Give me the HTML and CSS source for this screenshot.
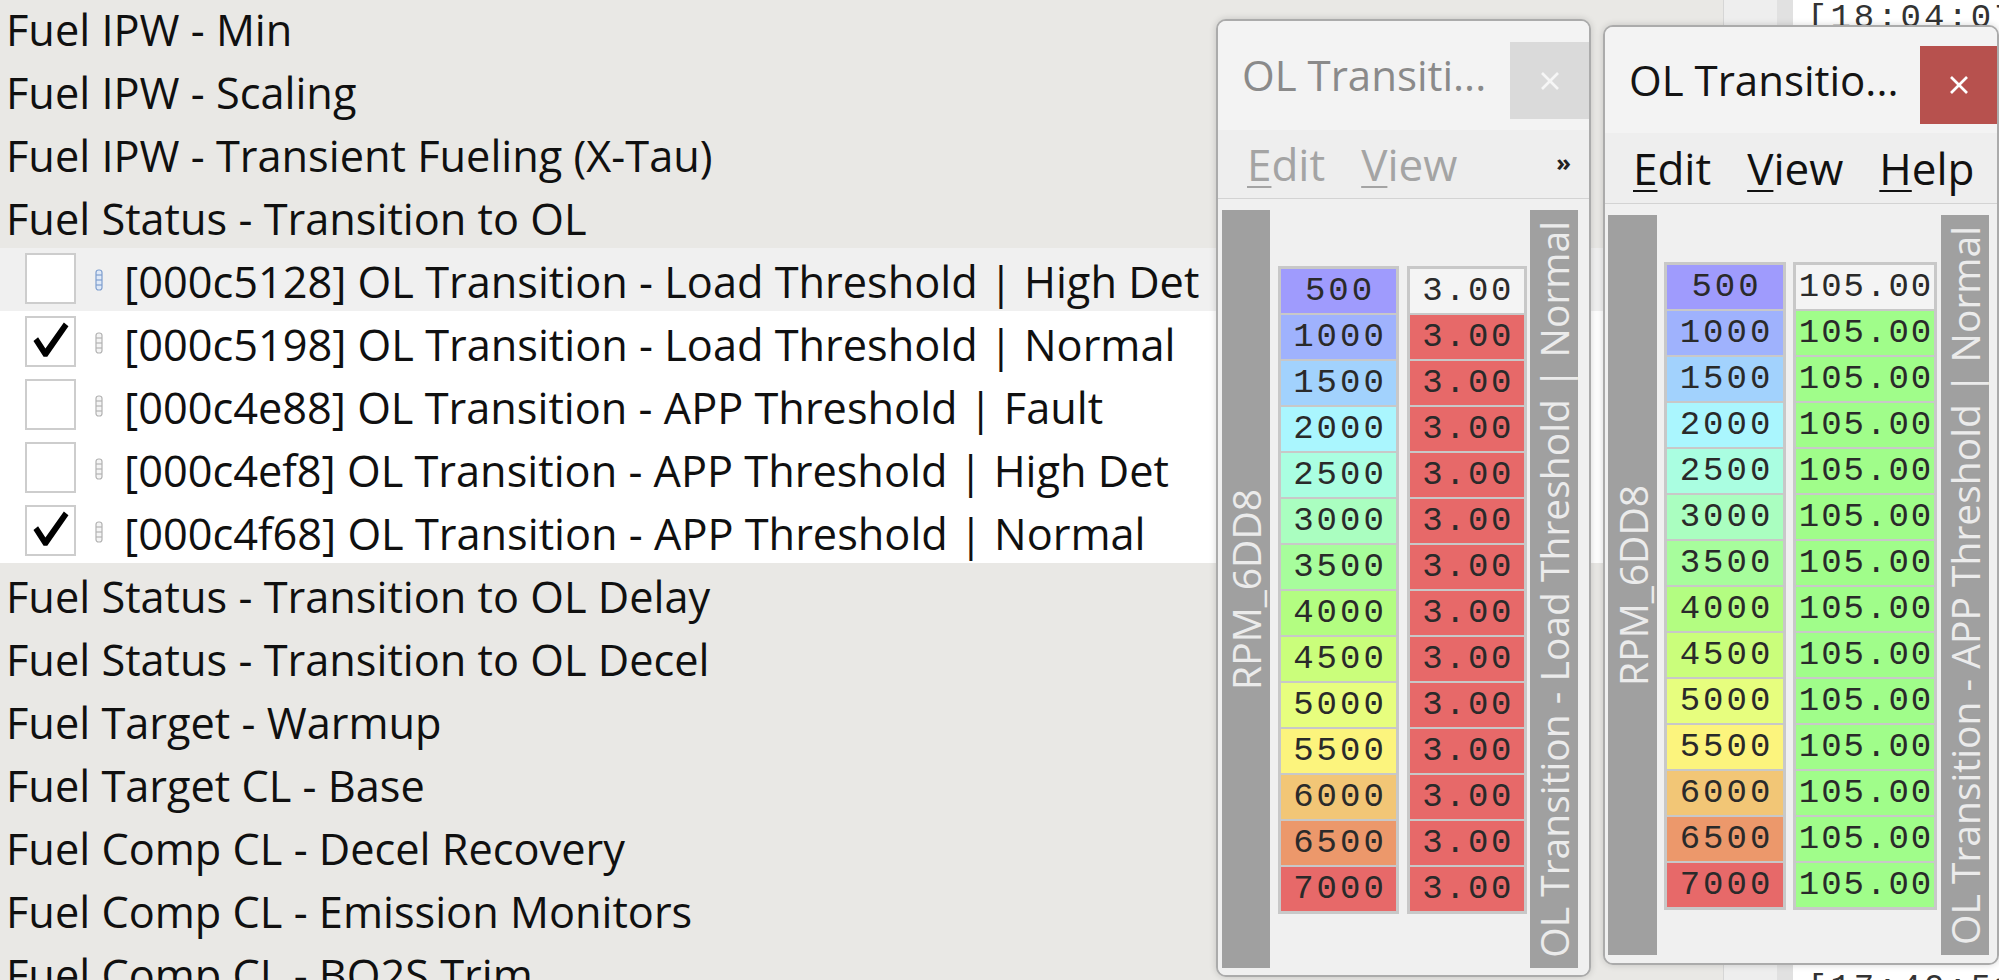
FILE: index.html
```html
<!DOCTYPE html>
<html>
<head>
<meta charset="utf-8">
<link rel="stylesheet" href="styles.css">
</head>
<body>
<div class="screen">
  <div class="list">
    <div class="row">Fuel IPW - Min</div>
    <div class="row">Fuel IPW - Scaling</div>
    <div class="row">Fuel IPW - Transient Fueling (X-Tau)</div>
    <div class="row">Fuel Status - Transition to OL</div>
    <div class="row sub sel">
      <span class="cb"></span>
      <svg class="ico blue" viewBox="0 0 8 22" width="8" height="22"><rect x="1" y="1" width="6" height="20" rx="2.5"/><line x1="1" y1="6" x2="7" y2="6"/><line x1="1" y1="11" x2="7" y2="11"/><line x1="1" y1="16" x2="7" y2="16"/></svg>
      <span class="lbl">[000c5128] OL Transition - Load Threshold | High Det</span>
    </div>
    <div class="row sub">
      <span class="cb"><svg viewBox="0 0 51 51" width="47" height="47"><polygon points="7,25 12,21 20,33 40,5 45,9 22,42 18,42"/></svg></span>
      <svg class="ico" viewBox="0 0 8 22" width="8" height="22"><rect x="1" y="1" width="6" height="20" rx="2.5"/><line x1="1" y1="6" x2="7" y2="6"/><line x1="1" y1="11" x2="7" y2="11"/><line x1="1" y1="16" x2="7" y2="16"/></svg>
      <span class="lbl">[000c5198] OL Transition - Load Threshold | Normal</span>
    </div>
    <div class="row sub">
      <span class="cb"></span>
      <svg class="ico" viewBox="0 0 8 22" width="8" height="22"><rect x="1" y="1" width="6" height="20" rx="2.5"/><line x1="1" y1="6" x2="7" y2="6"/><line x1="1" y1="11" x2="7" y2="11"/><line x1="1" y1="16" x2="7" y2="16"/></svg>
      <span class="lbl">[000c4e88] OL Transition - APP Threshold | Fault</span>
    </div>
    <div class="row sub">
      <span class="cb"></span>
      <svg class="ico" viewBox="0 0 8 22" width="8" height="22"><rect x="1" y="1" width="6" height="20" rx="2.5"/><line x1="1" y1="6" x2="7" y2="6"/><line x1="1" y1="11" x2="7" y2="11"/><line x1="1" y1="16" x2="7" y2="16"/></svg>
      <span class="lbl">[000c4ef8] OL Transition - APP Threshold | High Det</span>
    </div>
    <div class="row sub">
      <span class="cb"><svg viewBox="0 0 51 51" width="47" height="47"><polygon points="7,25 12,21 20,33 40,5 45,9 22,42 18,42"/></svg></span>
      <svg class="ico" viewBox="0 0 8 22" width="8" height="22"><rect x="1" y="1" width="6" height="20" rx="2.5"/><line x1="1" y1="6" x2="7" y2="6"/><line x1="1" y1="11" x2="7" y2="11"/><line x1="1" y1="16" x2="7" y2="16"/></svg>
      <span class="lbl">[000c4f68] OL Transition - APP Threshold | Normal</span>
    </div>
    <div class="row">Fuel Status - Transition to OL Delay</div>
    <div class="row">Fuel Status - Transition to OL Decel</div>
    <div class="row">Fuel Target - Warmup</div>
    <div class="row">Fuel Target CL - Base</div>
    <div class="row">Fuel Comp CL - Decel Recovery</div>
    <div class="row">Fuel Comp CL - Emission Monitors</div>
    <div class="row">Fuel Comp CL - BO2S Trim</div>
  </div>
  <div class="sbar"></div>
  <div class="split"></div>
  <div class="log">
    <div class="logline first">[18:04:07] Loaded</div>
    <div class="logline last">[17:40:51] Loaded</div>
  </div>

  <div class="win w1">
    <div class="tbar">
      <div class="ttl">OL Transiti...</div>
      <div class="close"><svg viewBox="0 0 18 18" width="18" height="18"><line x1="1" y1="1" x2="17" y2="17"/><line x1="17" y1="1" x2="1" y2="17"/></svg></div>
    </div>
    <div class="mbar">
      <span class="mi"><u>E</u>dit</span>
      <span class="mi"><u>V</u>iew</span>
      <span class="more">»</span>
    </div>
    <div class="content">
      <div class="vbar lb"><span>RPM_6DD8</span></div>
      <div class="col axis">
        <div class="cell c1">500</div>
        <div class="cell c2">1000</div>
        <div class="cell c3">1500</div>
        <div class="cell c4">2000</div>
        <div class="cell c5">2500</div>
        <div class="cell c6">3000</div>
        <div class="cell c7">3500</div>
        <div class="cell c8">4000</div>
        <div class="cell c9">4500</div>
        <div class="cell c10">5000</div>
        <div class="cell c11">5500</div>
        <div class="cell c12">6000</div>
        <div class="cell c13">6500</div>
        <div class="cell c14">7000</div>
      </div>
      <div class="col data">
        <div class="cell blank">3.00</div>
        <div class="cell red">3.00</div>
        <div class="cell red">3.00</div>
        <div class="cell red">3.00</div>
        <div class="cell red">3.00</div>
        <div class="cell red">3.00</div>
        <div class="cell red">3.00</div>
        <div class="cell red">3.00</div>
        <div class="cell red">3.00</div>
        <div class="cell red">3.00</div>
        <div class="cell red">3.00</div>
        <div class="cell red">3.00</div>
        <div class="cell red">3.00</div>
        <div class="cell red">3.00</div>
      </div>
      <div class="vbar rb"><span>OL Transition - Load Threshold | Normal</span></div>
    </div>
  </div>

  <div class="win w2">
    <div class="tbar">
      <div class="ttl">OL Transitio...</div>
      <div class="close"><svg viewBox="0 0 18 18" width="18" height="18"><line x1="1" y1="1" x2="17" y2="17"/><line x1="17" y1="1" x2="1" y2="17"/></svg></div>
    </div>
    <div class="mbar">
      <span class="mi"><u>E</u>dit</span>
      <span class="mi"><u>V</u>iew</span>
      <span class="mi"><u>H</u>elp</span>
    </div>
    <div class="content">
      <div class="vbar lb"><span>RPM_6DD8</span></div>
      <div class="col axis">
        <div class="cell c1">500</div>
        <div class="cell c2">1000</div>
        <div class="cell c3">1500</div>
        <div class="cell c4">2000</div>
        <div class="cell c5">2500</div>
        <div class="cell c6">3000</div>
        <div class="cell c7">3500</div>
        <div class="cell c8">4000</div>
        <div class="cell c9">4500</div>
        <div class="cell c10">5000</div>
        <div class="cell c11">5500</div>
        <div class="cell c12">6000</div>
        <div class="cell c13">6500</div>
        <div class="cell c14">7000</div>
      </div>
      <div class="col data">
        <div class="cell blank">105.00</div>
        <div class="cell green">105.00</div>
        <div class="cell green">105.00</div>
        <div class="cell green">105.00</div>
        <div class="cell green">105.00</div>
        <div class="cell green">105.00</div>
        <div class="cell green">105.00</div>
        <div class="cell green">105.00</div>
        <div class="cell green">105.00</div>
        <div class="cell green">105.00</div>
        <div class="cell green">105.00</div>
        <div class="cell green">105.00</div>
        <div class="cell green">105.00</div>
        <div class="cell green">105.00</div>
      </div>
      <div class="vbar rb"><span>OL Transition - APP Threshold | Normal</span></div>
    </div>
  </div>
</div>
</body>
</html>
```
FILE: styles.css
```css
html, body {
  margin: 0;
  padding: 0;
}
body {
  width: 1999px;
  height: 980px;
  overflow: hidden;
  background: #e9e8e5;
  font-family: "Open Sans", "Noto Sans", sans-serif;
}
.screen {
  position: relative;
  width: 1999px;
  height: 980px;
  display: flex;
  overflow: hidden;
}

/* left tree list */
.list {
  width: 1723px;
  flex: none;
  margin-top: -4px;
  display: flex;
  flex-direction: column;
}
.row {
  box-sizing: border-box;
  height: 63px;
  flex: none;
  display: flex;
  align-items: center;
  padding-top: 4px;
  padding-left: 6px;
  font-size: 43.3px;
  line-height: 63px;
  color: #101010;
  white-space: nowrap;
}
.row.sub {
  background: #ffffff;
  padding-left: 25px;
}
.row.sub.sel {
  background: #f0f0f0;
}
.cb {
  width: 51px;
  height: 51px;
  box-sizing: border-box;
  border: 2px solid #cdcdcd;
  background: #ffffff;
  flex: none;
  display: flex;
  align-items: center;
  justify-content: center;
  margin-top: -6px;
}
.cb svg polygon {
  fill: #000;
}
.ico {
  flex: none;
  margin-left: 19px;
  margin-right: 21px;
  margin-top: -4px;
}
.ico rect {
  fill: #f4f4f4;
  stroke: #b2b2b2;
  stroke-width: 1.2;
}
.ico line {
  stroke: #b2b2b2;
  stroke-width: 1.2;
}
.ico.blue rect {
  fill: #dfe9f7;
  stroke: #7f9fcf;
}
.ico.blue line {
  stroke: #7f9fcf;
}

/* scrollbar + splitter + log */
.sbar {
  width: 53px;
  flex: none;
  background: #eeeeee;
  border-left: 1px solid #d6d6d6;
}
.split {
  width: 16px;
  flex: none;
  background: #e1e1e1;
}
.log {
  flex: 1;
  background: #ffffff;
  display: flex;
  flex-direction: column;
  overflow: hidden;
  padding-left: 14px;
}
.logline {
  font-family: "Liberation Mono", monospace;
  font-size: 34px;
  letter-spacing: 3px;
  line-height: 36px;
  color: #333;
  white-space: nowrap;
}
.logline.last {
  margin-top: auto;
  margin-bottom: -26px;
}

/* floating windows */
.win {
  position: absolute;
  box-sizing: border-box;
  border: 2px solid #ababab;
  border-radius: 10px;
  background: #f0f0f0;
  display: flex;
  flex-direction: column;
  overflow: hidden;
  box-shadow: 0 0 7px rgba(0, 0, 0, 0.16);
}
.w1 {
  left: 1216px;
  top: 19px;
  width: 375px;
  height: 958px;
}
.w2 {
  left: 1603px;
  top: 25px;
  width: 396px;
  height: 940px;
}
.tbar {
  flex: none;
  display: flex;
  align-items: flex-start;
  background: #f3f3f3;
}
.w1 .tbar { height: 109px; }
.w2 .tbar { height: 106px; }
.ttl {
  padding-left: 24px;
  font-size: 42px;
  line-height: 50px;
  white-space: nowrap;
}
.w1 .ttl { margin-top: 29px; color: #8a8a8a; }
.w2 .ttl { margin-top: 28px; color: #141414; }
.close {
  margin-left: auto;
  display: flex;
  align-items: center;
  justify-content: center;
}
.close line {
  stroke-width: 2.6;
}
.w1 .close {
  margin-top: 21px;
  width: 79px;
  height: 77px;
  background: #dadada;
}
.w1 .close line { stroke: #f6f6f6; }
.w2 .close {
  margin-top: 19px;
  width: 77px;
  height: 78px;
  background: #b7514e;
}
.w2 .close line { stroke: #ffffff; }

.mbar {
  flex: none;
  display: flex;
  align-items: center;
  gap: 36px;
  background: #eeeeee;
  border-bottom: 1px solid #d3d3d3;
  font-size: 44px;
}
.w1 .mbar { height: 68px; padding-left: 29px; color: #a4a4a4; }
.w2 .mbar { height: 70px; padding-left: 28px; color: #111111; }
.mi {
  line-height: 60px;
  white-space: nowrap;
}
.mi u {
  text-decoration-thickness: 2px;
  text-underline-offset: 5px;
}
.more {
  margin-left: auto;
  margin-right: 18px;
  font-size: 24px;
  font-weight: bold;
  color: #222;
  line-height: 30px;
  margin-top: -4px;
}

/* content */
.content {
  flex: 1;
  display: flex;
  align-items: stretch;
  background: #f0f0f0;
}
.w1 .content { padding: 11px 0 7px 4px; }
.w2 .content { padding: 11px 0 8px 3px; }
.vbar {
  flex: none;
  width: 48px;
  background: #a0a0a0;
  display: flex;
  align-items: center;
  justify-content: center;
  overflow: hidden;
}
.w2 .vbar.lb { width: 49px; }
.vbar span {
  writing-mode: vertical-rl;
  transform: rotate(180deg);
  font-size: 39px;
  line-height: 48px;
  color: #ebebeb;
  white-space: nowrap;
}
.col {
  flex: none;
  align-self: center;
  box-sizing: border-box;
  border: 3px solid #c8c8c8;
  background: #c8c8c8;
  display: flex;
  flex-direction: column;
  gap: 2px;
  margin-top: 1px;
}
.w1 .axis { width: 121px; margin-left: 8px; }
.w1 .data { width: 120px; margin-left: 8px; }
.w1 .rb { margin-left: 3px; }
.w2 .axis { width: 122px; margin-left: 7px; }
.w2 .data { width: 144px; margin-left: 7px; }
.w2 .rb { margin-left: 4px; }

.cell {
  height: 44px;
  font-family: "Liberation Mono", monospace;
  font-size: 34px;
  letter-spacing: 3px;
  line-height: 44px;
  text-align: center;
  color: #2a2a2a;
  white-space: nowrap;
  overflow: hidden;
  text-indent: 3px;
}
.data .cell { letter-spacing: 2.5px; text-indent: 2px; }
.w2 .data .cell { letter-spacing: 2px; }
.c1 { background: #9f9bfd; }
.c2 { background: #9fb2fd; }
.c3 { background: #a2d2fd; }
.c4 { background: #aaf6fe; }
.c5 { background: #aafee1; }
.c6 { background: #aafec0; }
.c7 { background: #a7fd9c; }
.c8 { background: #b3fd81; }
.c9 { background: #cafe7b; }
.c10 { background: #e7fe7e; }
.c11 { background: #fcf47d; }
.c12 { background: #f2c676; }
.c13 { background: #ec986b; }
.c14 { background: #e76969; }
.blank { background: #f4f4f4; }
.red { background: #e76969; }
.green { background: #a0fd8a; }
```
